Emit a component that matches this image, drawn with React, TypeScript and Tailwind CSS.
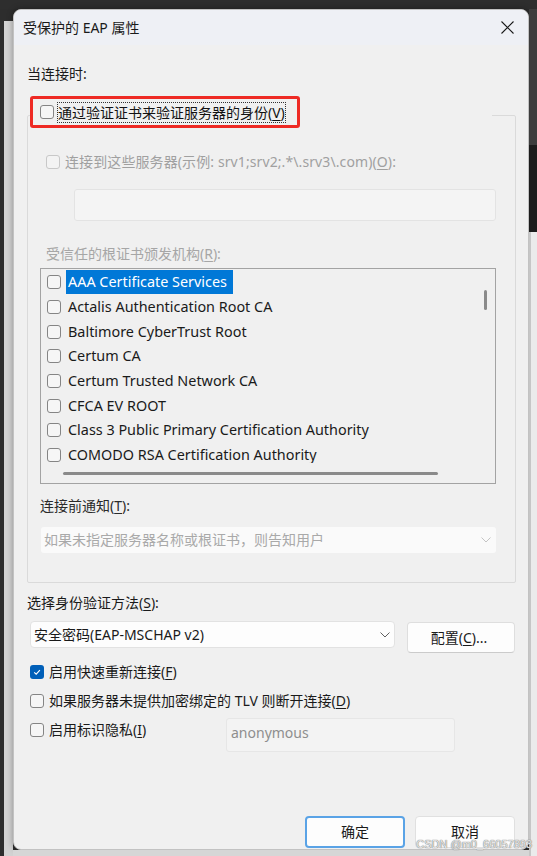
import React from "react";

const certs = [
  "AAA Certificate Services",
  "Actalis Authentication Root CA",
  "Baltimore CyberTrust Root",
  "Certum CA",
  "Certum Trusted Network CA",
  "CFCA EV ROOT",
  "Class 3 Public Primary Certification Authority",
  "COMODO RSA Certification Authority",
];

function U({ children }: { children: React.ReactNode }) {
  return <span className="underline underline-offset-2 decoration-1">{children}</span>;
}

function Check({ checked = false, disabled = false }: { checked?: boolean; disabled?: boolean }) {
  if (checked) {
    return (
      <span className="w-[14px] h-[14px] rounded-[3px] bg-[#005fb8] flex items-center justify-center shrink-0">
        <svg width="10" height="10" viewBox="0 0 10 10">
          <path d="M2.2 5.3 L4.2 7.2 L7.9 3.2" fill="none" stroke="#fff" strokeWidth="1.1" />
        </svg>
      </span>
    );
  }
  return (
    <span
      className={`w-[14px] h-[14px] rounded-[3px] border shrink-0 ${
        disabled ? "border-[#c8c8c8] bg-[#f3f3f3]" : "border-[#858585] bg-[#f6f6f6]"
      }`}
    />
  );
}

function Chevron({ color }: { color: string }) {
  return (
    <svg width="10" height="6" viewBox="0 0 10 6" className="shrink-0">
      <path d="M0.5 0.5 L5 5 L9.5 0.5" fill="none" stroke={color} strokeWidth="1" />
    </svg>
  );
}

function Dialog() {
  return (
    <div className="h-[841px] rounded-[8px] bg-[#f0f0f0] border border-[#c2c2c2] flex flex-col overflow-hidden shadow-[0_0_6px_rgba(0,0,0,0.35)] text-[14px] text-[#1a1a1a]">
      {/* title bar */}
      <div className="h-[35px] shrink-0 bg-[#eef0f5] flex items-center justify-between pl-[9px] pr-[14px]">
        <span className="leading-[20px]">受保护的 EAP 属性</span>
        <svg width="13" height="13" viewBox="0 0 13 13">
          <path d="M0.5 0.5 L12.5 12.5 M12.5 0.5 L0.5 12.5" stroke="#1a1a1a" strokeWidth="1.1" />
        </svg>
      </div>

      <div className="flex-1 flex flex-col pl-[13px] pr-[12px]">
        <div className="mt-[19px] leading-[20px]">当连接时:</div>

        <div className="mt-[12px] flex flex-col">
          <div className="relative z-10 ml-[3px] w-[462px] h-[32px] bg-[#f0f0f0]">
            <div className="w-[270px] h-[32px] border-[3px] border-[#ee2a24] rounded-[3px] flex items-center pl-[7px]">
              <Check />
              <span className="ml-[3px] border border-dotted border-[#333] leading-[19px] text-[#111] whitespace-nowrap">
                通过验证证书来验证服务器的身份(<U>V</U>)
              </span>
            </div>
          </div>

          {/* group box */}
          <div className="-mt-[13px] border border-[#dadada] rounded-[2px] pl-[12px] pr-[19px] pt-[36px] pb-[29px] flex flex-col">
            <div className="flex items-center h-[20px] ml-[6px]">
              <Check disabled />
              <span className="ml-[5px] text-[#a0a0a0] leading-[20px] whitespace-nowrap tracking-[0.1px]">
                连接到这些服务器(示例: srv1;srv2;.*\.srv3\.com)(<U>O</U>):
              </span>
            </div>
            <div className="mt-[17px] ml-[34px] h-[32px] bg-[#f4f4f4] border border-[#e3e3e3] rounded-[3px]" />
            <div className="mt-[23px] ml-[6px] leading-[20px] text-[#a6a6a6]">
              受信任的根证书颁发机构(<U>R</U>):
            </div>

            {/* list box */}
            <div className="mt-[4px] h-[216px] border border-[#a3a3a3] flex flex-col">
              <div className="flex flex-1 min-h-0">
                <div className="flex-1 overflow-hidden pt-[1px] flex flex-col">
                  {certs.map((c, i) => (
                    <div key={c} className="h-[24.7px] shrink-0 flex items-center">
                      <span className="ml-[6px] flex">
                        <Check />
                      </span>
                      <span
                        className={`ml-[5px] h-[24px] leading-[24px] pl-[2px] pr-[6px] whitespace-nowrap text-[14.4px] ${
                          i === 0 ? "bg-[#0078d7] text-white" : "text-[#1a1a1a]"
                        }`}
                      >
                        {c}
                      </span>
                    </div>
                  ))}
                </div>
                <div className="w-[20px] flex justify-center pt-[21px]">
                  <div className="w-[3px] h-[20px] rounded-full bg-[#8a8a8a]" />
                </div>
              </div>
              <div className="h-[20px] shrink-0 pt-[9px] pl-[22px]">
                <div className="w-[375px] h-[3px] rounded-full bg-[#8a8a8a]" />
              </div>
            </div>

            <div className="mt-[12px] leading-[20px] text-[#2a2a2a]">
              连接前通知(<U>T</U>):
            </div>
            <div className="mt-[11px] ml-[1px] h-[26px] bg-[#fafafa] rounded-[3px] flex items-center justify-between pl-[3px] pr-[5px]">
              <span className="text-[#a9a9a9] leading-[20px]">如果未指定服务器名称或根证书，则告知用户</span>
              <Chevron color="#c4c4c4" />
            </div>
          </div>
        </div>

        <div className="mt-[10px] leading-[20px]">
          选择身份验证方法(<U>S</U>):
        </div>
        <div className="mt-[8px] ml-[3px] flex items-start gap-[12px]">
          <div className="w-[365px] h-[27px] bg-[#fdfdfd] border border-[#e2e2e2] rounded-[4px] flex items-center justify-between pl-[3px] pr-[4px]">
            <span className="leading-[20px]">安全密码(EAP-MSCHAP v2)</span>
            <Chevron color="#5f5f5f" />
          </div>
          <div className="mt-[1px] w-[108px] h-[31px] bg-[#fdfdfd] border border-[#dedede] border-b-[#cbcbcb] rounded-[4px] flex items-center justify-center leading-[20px] pr-[4px]">
            配置(<U>C</U>)...
          </div>
        </div>

        <div className="mt-[9px] ml-[3px] h-[20px] flex items-center">
          <Check checked />
          <span className="ml-[5px] leading-[20px]">
            启用快速重新连接(<U>F</U>)
          </span>
        </div>
        <div className="mt-[9px] ml-[3px] h-[20px] flex items-center">
          <Check />
          <span className="ml-[5px] leading-[20px] whitespace-nowrap">
            如果服务器未提供加密绑定的 TLV 则断开连接(<U>D</U>)
          </span>
        </div>
        <div className="mt-[7px] ml-[3px] flex items-start">
          <div className="w-[196px] mt-[2px] h-[20px] flex items-center">
            <Check />
            <span className="ml-[5px] leading-[20px]">
              启用标识隐私(<U>I</U>)
            </span>
          </div>
          <div className="w-[229px] h-[34px] bg-[#f3f3f3] border border-[#e6e6e6] rounded-[3px] pl-[4px] pt-[4px] leading-[20px] text-[#8e8e8e]">
            anonymous
          </div>
        </div>

        <div className="mt-[64px] mr-[1px] flex justify-end gap-[10px]">
          <div className="w-[100px] h-[32px] bg-[#fdfdfd] border-2 border-[#5aa3e6] rounded-[4px] flex items-center justify-center leading-[16px]">
            确定
          </div>
          <div className="w-[100px] h-[32px] bg-[#fdfdfd] border border-[#e0e0e0] rounded-[4px] flex items-center justify-center leading-[16px]">
            取消
          </div>
        </div>
      </div>
    </div>
  );
}

export default function App() {
  return (
    <div className="relative w-[537px] h-[856px] bg-[#2c2c2c] flex flex-col overflow-hidden font-['Noto_Sans','Noto_Sans_CJK_SC',sans-serif]">
      <div className="h-[9px] shrink-0 bg-[#2e2e2e]" />
      <div className="flex flex-1 min-h-0">
        <div className="w-[4px] bg-[#2d2d2d]" />
        <div className="w-[9px] flex flex-col">
          <div className="h-[12px] bg-[#2d2d2d]" />
          <div className="flex-1 bg-[#d2d2d2]" />
        </div>
        <div className="w-[516px] flex flex-col">
          <Dialog />
          <div className="flex-1 bg-[#d6d6d6]" />
        </div>
        <div className="w-[8px] flex flex-col">
          <div className="h-[136px] bg-[#3d3d3d]" />
          <div className="h-[87px] bg-[#1c1c1c]" />
          <div className="flex-1 bg-[#ebebeb] border-l-2 border-[#c6c6c6]" />
        </div>
      </div>
      {/* watermark over the dialog corner */}
      <div className="absolute right-[5px] bottom-[6px] text-[11px] leading-[12px] text-[#e8e8e8] [text-shadow:0_0_1px_#777,0_0_1px_#777] font-['Liberation_Sans',sans-serif]">
        CSDN @m0_66057893
      </div>
    </div>
  );
}
